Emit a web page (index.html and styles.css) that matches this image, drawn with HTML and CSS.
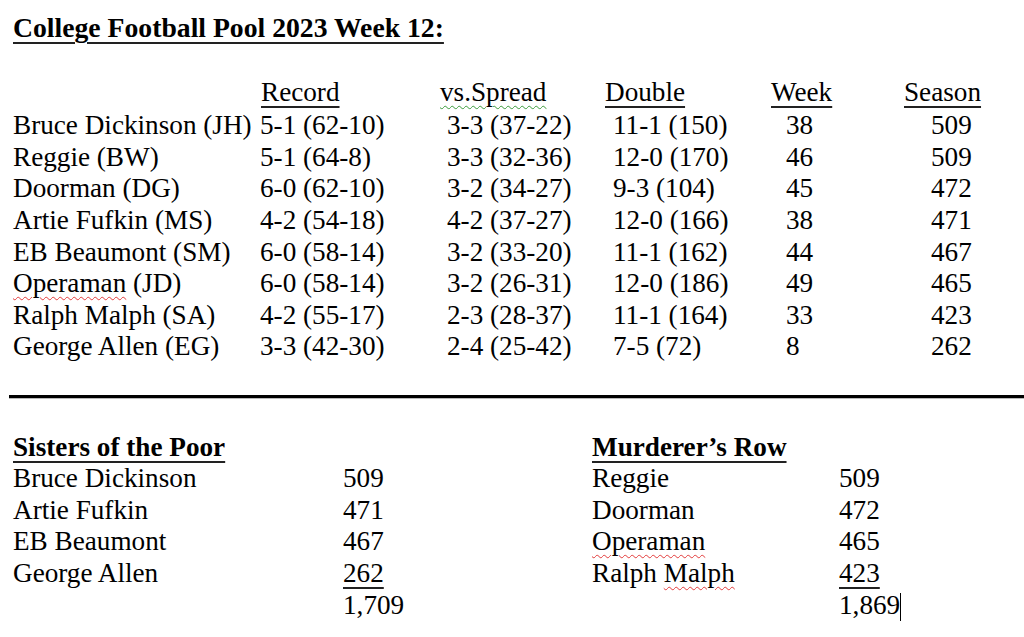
FILE: index.html
```html
<!DOCTYPE html>
<html lang="en">
<head>
<meta charset="utf-8">
<title>College Football Pool 2023 Week 12</title>
<link rel="stylesheet" href="styles.css">
</head>
<body>
<div class="page">
  <h1 class="title"><span class="ul">College Football Pool 2023 Week 12:</span></h1>

  <div class="standings">
    <div class="head"></div>
    <div class="head h-record"><span class="ul">Record</span></div>
    <div class="head h-spread"><span class="grammar">vs.Spread</span></div>
    <div class="head h-double"><span class="ul">Double</span></div>
    <div class="head h-week"><span class="ul">Week</span></div>
    <div class="head h-season"><span class="ul">Season</span></div>

    <div class="name">Bruce Dickinson (JH)</div><div class="rec">5-1 (62-10)</div><div class="spr">3-3 (37-22)</div><div class="dbl">11-1 (150)</div><div class="wk">38</div><div class="ssn">509</div>
    <div class="name">Reggie (BW)</div><div class="rec">5-1 (64-8)</div><div class="spr">3-3 (32-36)</div><div class="dbl">12-0 (170)</div><div class="wk">46</div><div class="ssn">509</div>
    <div class="name">Doorman (DG)</div><div class="rec">6-0 (62-10)</div><div class="spr">3-2 (34-27)</div><div class="dbl">9-3 (104)</div><div class="wk">45</div><div class="ssn">472</div>
    <div class="name">Artie Fufkin (MS)</div><div class="rec">4-2 (54-18)</div><div class="spr">4-2 (37-27)</div><div class="dbl">12-0 (166)</div><div class="wk">38</div><div class="ssn">471</div>
    <div class="name">EB Beaumont (SM)</div><div class="rec">6-0 (58-14)</div><div class="spr">3-2 (33-20)</div><div class="dbl">11-1 (162)</div><div class="wk">44</div><div class="ssn">467</div>
    <div class="name"><span class="spell">Operaman</span> (JD)</div><div class="rec">6-0 (58-14)</div><div class="spr">3-2 (26-31)</div><div class="dbl">12-0 (186)</div><div class="wk">49</div><div class="ssn">465</div>
    <div class="name">Ralph Malph (SA)</div><div class="rec">4-2 (55-17)</div><div class="spr">2-3 (28-37)</div><div class="dbl">11-1 (164)</div><div class="wk">33</div><div class="ssn">423</div>
    <div class="name">George Allen (EG)</div><div class="rec">3-3 (42-30)</div><div class="spr">2-4 (25-42)</div><div class="dbl">7-5 (72)</div><div class="wk">8</div><div class="ssn">262</div>
  </div>

  <div class="rule"></div>

  <div class="teams">
    <div class="team team-left">
      <div class="team-name"><span class="ul">Sisters of the Poor</span></div>
      <div>Bruce Dickinson</div><div>509</div>
      <div>Artie Fufkin</div><div>471</div>
      <div>EB Beaumont</div><div>467</div>
      <div>George Allen</div><div><span class="sum-ul">262</span></div>
      <div></div><div>1,709</div>
    </div>
    <div class="team team-right">
      <div class="team-name"><span class="ul">Murderer’s Row</span></div>
      <div>Reggie</div><div>509</div>
      <div>Doorman</div><div>472</div>
      <div><span class="spell">Operaman</span></div><div>465</div>
      <div>Ralph <span class="spell">Malph</span></div><div><span class="sum-ul">423</span></div>
      <div></div><div>1,869<span class="caret"></span></div>
    </div>
  </div>
</div>
</body>
</html>
```

FILE: styles.css
```css
html, body {
  margin: 0;
  padding: 0;
  background: #ffffff;
}

.page {
  font-family: "Liberation Serif", "Times New Roman", serif;
  font-size: 27.2px;
  line-height: 31.6px;
  color: #000;
  padding: 12px 0 0 13px;
}

.title {
  font-size: 27.7px;
  font-weight: bold;
  line-height: 31.6px;
  margin: 0 0 33px 0;
}

.ul {
  text-decoration: underline solid #222;
  text-decoration-thickness: 1.5px;
  text-underline-offset: 5px;
}

.grammar {
  text-decoration: underline wavy #3a9a3a;
  text-decoration-thickness: 1px;
  text-underline-offset: 4px;
}

.spell {
  text-decoration: underline wavy #e23a3a;
  text-decoration-thickness: 1px;
  text-underline-offset: 4px;
}

.standings {
  display: grid;
  grid-template-columns: 247px 180px 165px 166px 133px auto;
}

.head {
  margin-bottom: 2px;
  white-space: nowrap;
}

.h-record { padding-left: 1px; }

.name, .rec, .spr, .dbl, .wk, .ssn { white-space: nowrap; }

.spr { padding-left: 7px; }
.dbl { padding-left: 8px; }
.wk  { padding-left: 15px; }
.ssn { padding-left: 27px; }

.rule {
  margin: 31.6px 0 0 -4px;
  height: 3px;
  background: #000;
  border-bottom: 1px solid #b8b8b8;
}

.teams {
  display: flex;
  margin-top: 33px;
}

.team {
  display: grid;
  white-space: nowrap;
}

.team-left {
  width: 579px;
  grid-template-columns: 330px auto;
}

.team-right {
  grid-template-columns: 247px auto;
}

.team-name {
  grid-column: 1 / -1;
  font-weight: bold;
}

.sum-ul {
  text-decoration: underline solid #222;
  text-decoration-thickness: 1.5px;
  text-underline-offset: 5px;
}

.caret {
  display: inline-block;
  width: 0;
  height: 28px;
  border-left: 1.5px solid #000;
  vertical-align: -7px;
}
```
